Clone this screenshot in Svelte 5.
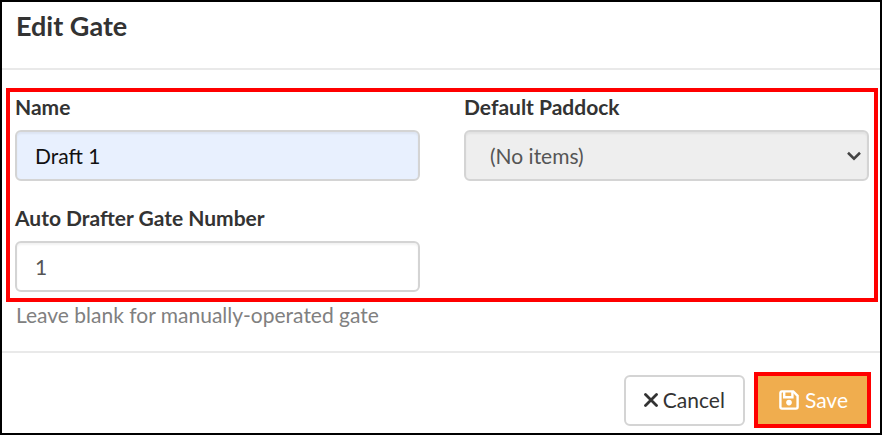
<script>
  let name = 'Draft 1';
  let gateNumber = '1';
  let paddocks = [];

  function save() {
    console.log('Saving gate', { name, gateNumber });
  }
</script>

<form class="dialog" autocomplete="off" on:submit|preventDefault={save}>
  <header class="dialog-header">
    <h4>Edit Gate</h4>
  </header>

  <div class="dialog-body">
    <div class="fields highlight">
      <div class="field">
        <label for="gate-name">Name</label>
        <input id="gate-name" class="control filled" type="text" bind:value={name} />
      </div>

      <div class="field">
        <label for="default-paddock">Default Paddock</label>
        <div class="select-wrap">
          <select id="default-paddock" class="control" disabled={paddocks.length === 0}>
            {#each paddocks as paddock}
              <option>{paddock}</option>
            {:else}
              <option>(No items)</option>
            {/each}
          </select>
          <svg class="chevron" viewBox="0 0 14 10" aria-hidden="true">
            <path d="M1 1.8 L7 7.6 L13 1.8" />
          </svg>
        </div>
      </div>

      <div class="field">
        <label for="gate-number">Auto Drafter Gate Number</label>
        <input
          id="gate-number"
          class="control"
          type="text"
          inputmode="numeric"
          aria-describedby="gate-number-help"
          bind:value={gateNumber}
        />
      </div>
    </div>
    <p id="gate-number-help" class="help">Leave blank for manually-operated gate</p>
  </div>

  <footer class="dialog-footer">
    <button type="button" class="btn btn-cancel">
      <svg class="icon-times" viewBox="0 0 14 14" aria-hidden="true">
        <path d="M1.5 1.5 L12.5 12.5 M12.5 1.5 L1.5 12.5" />
      </svg>
      <span>Cancel</span>
    </button>
    <div class="highlight">
      <button type="submit" class="btn btn-save">
        <svg class="icon-save" viewBox="0 0 20 20" aria-hidden="true">
          <path d="M3 1.4 H14.2 L18.6 5.8 V17 Q18.6 18.6 17 18.6 H3 Q1.4 18.6 1.4 17 V3 Q1.4 1.4 3 1.4 Z" />
          <path d="M5.2 2 V7.2 H13.4 V2" />
          <circle cx="10" cy="12.6" r="2.8" />
        </svg>
        <span>Save</span>
      </button>
    </div>
  </footer>
</form>

<style>
  :global(body) {
    background: #fff;
  }

  .dialog {
    border: 2px solid #000;
    color: #333;
    font-family: Lato, 'Liberation Sans', sans-serif;
    font-size: 21px;
    line-height: 26px;
  }

  .dialog-header {
    padding: 7px 14px 25px;
    border-bottom: 2px solid #e9e9e9;
  }

  h4 {
    margin: 0;
    font-size: 27px;
    font-weight: 700;
    line-height: 34px;
  }

  .dialog-body {
    padding: 18px 2px 24px 4px;
  }

  .highlight {
    border: 4px solid #f00;
  }

  .fields {
    display: grid;
    grid-template-columns: 1fr 1fr;
    gap: 24px 44px;
    padding: 2px 5px 6px;
  }

  .field {
    display: flex;
    flex-direction: column;
    gap: 10px;
  }

  label {
    font-weight: 700;
  }

  .control {
    box-sizing: border-box;
    width: 100%;
    height: 51px;
    padding: 0 18px;
    border: 2px solid #d4d4d4;
    border-radius: 6px;
    background: #fff;
    box-shadow: inset 0 2px 2px rgba(0, 0, 0, 0.05);
    color: #555;
    font: inherit;
  }

  .filled {
    background: #e8f0fe;
    color: #111;
  }

  .select-wrap {
    position: relative;
  }

  select.control {
    display: block;
    padding: 0 24px;
    appearance: none;
    background: #eee;
    opacity: 1;
  }

  .chevron {
    position: absolute;
    top: 21px;
    right: 8px;
    width: 14px;
    height: 10px;
    fill: none;
    stroke: #444;
    stroke-width: 2.6;
    pointer-events: none;
  }

  .help {
    margin: 0;
    padding: 0 10px;
    color: #808080;
    line-height: 25px;
  }

  .dialog-footer {
    display: flex;
    align-items: center;
    justify-content: flex-end;
    gap: 9px;
    padding: 19px 9px 5px;
    border-top: 2px solid #e9e9e9;
  }

  .btn {
    display: flex;
    align-items: center;
    justify-content: center;
    font: inherit;
    cursor: pointer;
  }

  .btn-cancel {
    gap: 5px;
    height: 51px;
    padding: 0 18px;
    border: 2px solid #d4d4d4;
    border-radius: 6px;
    background: #fff;
    color: #333;
  }

  .btn-save {
    gap: 6px;
    height: 48px;
    padding: 0 19px 0 21px;
    border: 0;
    background: #f0ad4e;
    color: #fff;
  }

  .icon-times {
    width: 14px;
    height: 14px;
    stroke: #333;
    stroke-width: 2.8;
    stroke-linecap: round;
  }

  .icon-save {
    width: 20px;
    height: 20px;
    fill: none;
    stroke: #fff;
    stroke-width: 2.4;
  }

  .icon-save circle {
    fill: #fff;
    stroke: none;
  }
</style>
